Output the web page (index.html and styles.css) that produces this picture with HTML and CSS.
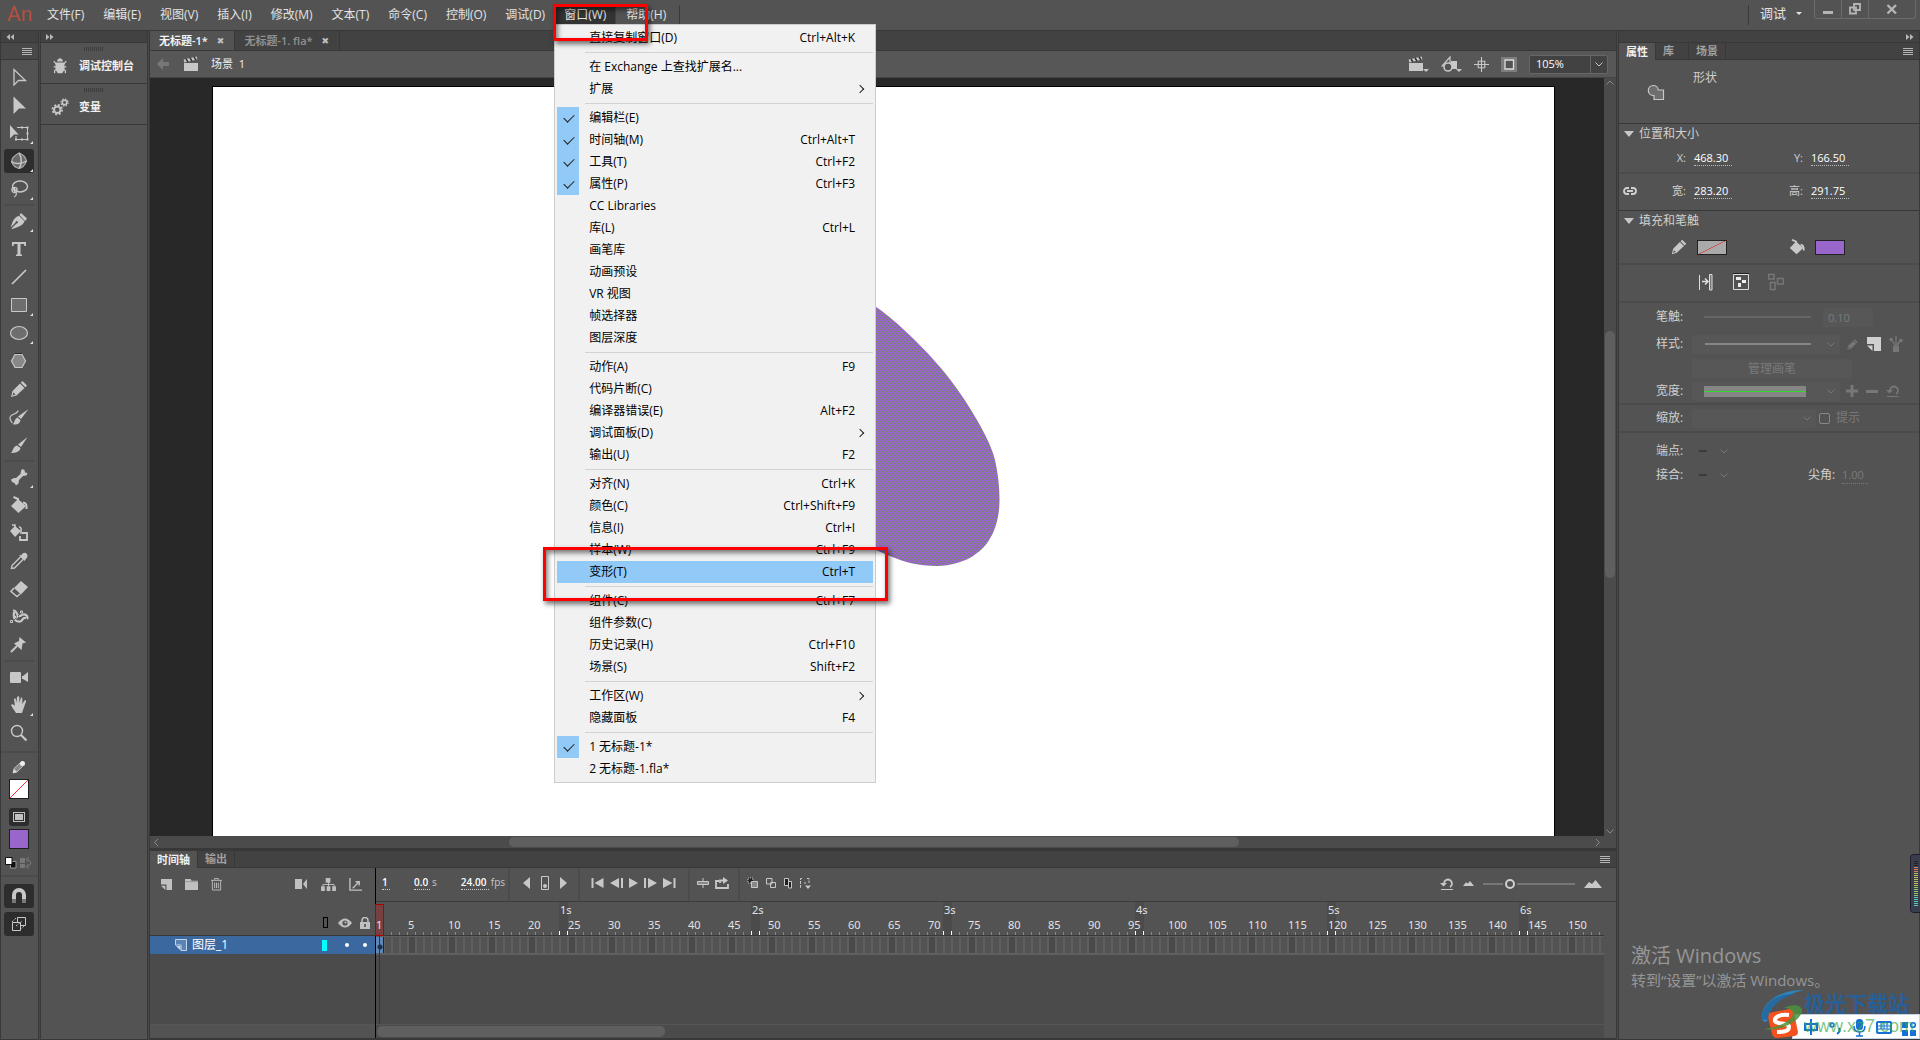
FILE: index.html
```html
<!DOCTYPE html>
<html lang="zh-CN">
<head>
<meta charset="utf-8">
<title>An - 无标题-1*</title>
<link rel="stylesheet" href="styles.css">
</head>
<body>
<svg class="defs" aria-hidden="true">
  <defs>
    <symbol id="i-select" viewBox="0 0 20 20"><path d="M5 2.500V18L9.500 13.500H16.500Z" fill="none" stroke="currentColor" stroke-width="1.300"/></symbol>
    <symbol id="i-subselect" viewBox="0 0 20 20"><path d="M4.500 1.500V19L10 13.500H17Z" fill="currentColor"/></symbol>
    <symbol id="i-transform" viewBox="0 0 20 20"><path d="M1 2V15.500L5 11.500H9.500Z" fill="currentColor"/><path d="M8 4.500H18.500V16.500H7V13" fill="none" stroke="currentColor"/><path d="M17.500 3.500h2v2h-2zM17.500 9.500h2v2h-2zM17.500 15.500h2v2h-2zM12 15.500h2v2h-2zM6 15.500h2v2h-2zM12 3.500h2v2h-2z" fill="currentColor"/></symbol>
    <symbol id="i-rotate3d" viewBox="0 0 20 20"><path d="M10 2C14 3 17 7 17.500 10C16 14 13 17 10 17.500C6 16.500 3.500 13.500 2.500 10.500C3 7 6 4 10 2Z" fill="#6a6a6a" stroke="#aaa" stroke-width="1.200"/><path d="M10 2C13 6 13 14 10 17.500M2.500 10.500C6 13.500 13 13 17.500 10" fill="none" stroke="currentColor" stroke-width="1.500"/></symbol>
    <symbol id="i-lasso" viewBox="0 0 20 20"><ellipse cx="11" cy="7.500" rx="7.500" ry="5.500" fill="none" stroke="currentColor" stroke-width="1.400"/><circle cx="5.500" cy="11" r="2.600" fill="none" stroke="currentColor" stroke-width="1.300"/><path d="M3 11H8M5.500 8.500V13C8 13 8 17 5 18" fill="none" stroke="currentColor" stroke-width="1.200"/></symbol>
    <symbol id="i-pen" viewBox="0 0 20 20"><path d="M12 2L18 7.500L16 10L10.500 4Z" fill="currentColor"/><path d="M10 4.800L15.500 10.300C14 15 8 16.500 3 18L2.500 17.500L7.500 12.500A1.200 1.200 0 1 0 6.500 11.500L1.800 16.500C3 12 5 6 10 4.800Z" fill="currentColor"/></symbol>
    <symbol id="i-text" viewBox="0 0 20 20"><path d="M3 3H17V7H15.500L15 5H11.500V15.500H13V17H7V15.500H8.500V5H5L4.500 7H3Z" fill="currentColor"/></symbol>
    <symbol id="i-line" viewBox="0 0 20 20"><path d="M3 17L17 3" stroke="currentColor" stroke-width="1.700"/></symbol>
    <symbol id="i-rect" viewBox="0 0 20 20"><path d="M2.500 3.500H17.500V16.500H2.500Z" fill="#6e6e6e" stroke="currentColor"/></symbol>
    <symbol id="i-oval" viewBox="0 0 20 20"><ellipse cx="10" cy="10" rx="8.500" ry="6.500" fill="#6e6e6e" stroke="currentColor" stroke-width="1.200"/></symbol>
    <symbol id="i-hex" viewBox="0 0 20 20"><path d="M6 3.500H13L16.500 10L13 16.500H6L2.500 10Z" fill="#888" stroke="currentColor" stroke-width="1.200"/><path d="M6 2.500H13" stroke="#2b2b2b"/></symbol>
    <symbol id="i-pencil" viewBox="0 0 20 20"><path d="M13.500 2L18 6.500L16.300 8.200L11.800 3.700ZM11 4.500L15.500 9L7.500 16.500L2 18L3.500 12ZM4.500 13.500L3.500 16.500L6.500 15.500Z" fill="currentColor" fill-rule="evenodd"/></symbol>
    <symbol id="i-artbrush" viewBox="0 0 20 20"><path d="M19.500 2L12 12L9 9.500ZM8.500 10.500L11.500 13C11 17 7 18.500 3.500 17C6 16 5 12 8.500 10.500Z" fill="currentColor"/><path d="M9 3.500C9 8 1 6 1 11C1 14 3 14.500 3 16" fill="none" stroke="currentColor" stroke-width="1.200"/></symbol>
    <symbol id="i-brush" viewBox="0 0 20 20"><path d="M18.500 2L12 12L9 9.500ZM8 10.500L11.500 13C11 17 6 18 2 18C4 16 4 11.500 8 10.500Z" fill="currentColor"/></symbol>
    <symbol id="i-bone" viewBox="0 0 20 20"><path d="M13 2L15.500 3L16 5.500L18.500 6L17.500 8.500L14 9L10 13L9.500 16.500L7 18.500L5.500 16L3 15L2 12.500L5 11H7L11.500 7L12 4Z" fill="currentColor"/></symbol>
    <symbol id="i-bucket" viewBox="0 0 20 20"><path d="M9 4L17 11L9.500 18L2 11Z" fill="currentColor"/><path d="M9 10V4L4.500 2M14 7.500C18 8 17.500 11 17.500 14" fill="none" stroke="currentColor" stroke-width="2"/></symbol>
    <symbol id="i-inkbottle" viewBox="0 0 20 20"><path d="M6 3L12 8L6 14L1 8Z" fill="currentColor"/><path d="M6 6V2H3M10 4C13 4 12 7 12 11" fill="none" stroke="currentColor" stroke-width="1.500"/><path d="M13 10H18V17H11V13" fill="none" stroke="currentColor" stroke-width="1.800"/></symbol>
    <symbol id="i-eyedrop" viewBox="0 0 20 20"><path d="M11.500 6L3 14.500L2.500 17.500L5.500 17L14 8.500" fill="none" stroke="currentColor" stroke-width="1.400"/><path d="M10 4.500L15.500 10L16.500 8.500C19 6 19 4 17.500 2.500C16 1 14 1.500 12.500 4Z" fill="currentColor"/></symbol>
    <symbol id="i-eraser" viewBox="0 0 20 20"><path d="M12 2L19 8L12 15.500L5 9Z" fill="currentColor"/><path d="M5 9L2 12.500L8 17.500L11 15" fill="none" stroke="currentColor" stroke-width="1.500"/></symbol>
    <symbol id="i-width" viewBox="0 0 20 20"><path d="M4 3.500C9 3 7 10 11 9C14 8 14 6 17 8C19 9 18 11 19 12M5 5C4 13 7 15 11 14.500C14 14 13 10 17 11" fill="none" stroke="currentColor" stroke-width="2.200"/><path d="M3 15L12 6" stroke="#535353"/><path d="M1.500 13.500h2v2h-2zM11.500 4h2v2h-2zM6.500 9h2v2h-2z" fill="#535353" stroke="currentColor"/></symbol>
    <symbol id="i-pin" viewBox="0 0 20 20"><path d="M10.500 2L17 7.500L13.500 8.500L12.500 15L5 8.500L10 6Z" fill="currentColor"/><path d="M8 11L2 17" stroke="currentColor" stroke-width="2"/></symbol>
    <symbol id="i-camera" viewBox="0 0 20 20"><rect x="1" y="5" width="11" height="11" rx="1" fill="currentColor"/><path d="M13 9H14L19 5V15L14 12H13Z" fill="currentColor"/></symbol>
    <symbol id="i-hand" viewBox="0 0 20 20"><path d="M7 18C5 15 3 12 2 10C3 8.500 5 10 6 11L5 4C6 2.500 7 3.500 7.500 8L8 2C9 1 10 1 10.300 2V8L12 2.500C13 2 14 3 13 9L16 5C17 5 17.500 6 16.500 8L14 15L13 18Z" fill="currentColor"/></symbol>
    <symbol id="i-zoom" viewBox="0 0 20 20"><circle cx="8" cy="8" r="5.500" fill="none" stroke="currentColor" stroke-width="1.400"/><path d="M12 12L17.500 17.500" stroke="currentColor" stroke-width="2.200"/></symbol>
    <symbol id="i-strokepen" viewBox="0 0 20 20"><path d="M4 16L5 11.500L11 6L14 9L8 15Z" fill="#888" stroke="#bbb"/><path d="M4 16l1-4 3 3z" fill="#ddd"/><circle cx="13.500" cy="6.500" r="2.500" fill="#eee"/></symbol>
    <symbol id="i-magnet" viewBox="0 0 20 20"><path d="M5 13V9A5 5 0 0 1 15 9V13" fill="none" stroke="currentColor" stroke-width="4"/><path d="M5 13V17M15 13V17" stroke="#777" stroke-width="4"/></symbol>
    <symbol id="i-snap" viewBox="0 0 20 20"><path d="M3.500 8.500H11.500V16.500H3.500Z" fill="none" stroke="currentColor"/><path d="M8.500 8V3.500H16.500V11.500H12" fill="none" stroke="currentColor"/><path d="M3 8L8 3M11 16L16 11M7 12L13 7" stroke="currentColor" stroke-dasharray="2 1.500"/></symbol>
    <symbol id="i-bug" viewBox="0 0 20 20"><path d="M7 3L10 1L13 3V5H7ZM5 6H15V14L12.500 18H7.500L5 14Z" fill="currentColor"/><path d="M3 4.500L6 8M17 4.500L14 8M3 11H17M4 18V15L7 13M16 18V15L13 13" fill="none" stroke="currentColor" stroke-width="1.400"/></symbol>
    <symbol id="i-gears" viewBox="0 0 20 20"><circle cx="7" cy="13" r="3.600" fill="none" stroke="currentColor" stroke-width="2.200"/><circle cx="7" cy="13" r="5.400" fill="none" stroke="currentColor" stroke-width="1.800" stroke-dasharray="2.200 2.040"/><circle cx="15" cy="5" r="2.400" fill="none" stroke="currentColor" stroke-width="1.600"/><circle cx="15" cy="5" r="3.900" fill="none" stroke="currentColor" stroke-width="1.400" stroke-dasharray="1.700 1.363"/></symbol>
    <symbol id="i-clapper" viewBox="0 0 16 16"><path d="M1 7H15V15H1Z" fill="currentColor"/><path d="M1 5L14 2" stroke="currentColor" stroke-width="3"/><path d="M3 3l2 3M7 2l2 3M11 1l2 3" stroke="#333" stroke-width="1.500"/></symbol>
    <symbol id="i-back" viewBox="0 0 12 12"><path d="M0 6L6 0V4H12V8H6V12Z" fill="currentColor"/></symbol>
    <symbol id="i-shapes" viewBox="0 0 16 16"><path d="M9 1V10H1Z" fill="none" stroke="currentColor" stroke-width="1.200"/><path d="M10 5H16V13H9Z" fill="currentColor"/><circle cx="7" cy="11" r="4" fill="#535353" stroke="currentColor" stroke-width="1.600"/></symbol>
    <symbol id="i-center" viewBox="0 0 16 16"><path d="M8 0V16M0 8H16M4.500 4.500H11.500V11.500H4.500Z" fill="none" stroke="currentColor" stroke-width="1.200"/></symbol>
    <symbol id="i-clip" viewBox="0 0 16 16"><path d="M0 1H16V16H0Z" fill="#7d7d7d"/><path d="M4 4H12.500V13H4Z" fill="#535353" stroke="#ddd" stroke-width="1.300"/></symbol>
    <symbol id="i-shape" viewBox="0 0 18 18"><path d="M6 12.500A5 5 0 1 1 11.300 7H16.500V16.500H7V12.500Z" fill="#6e6e6e" stroke="#c8c8c8" stroke-width="1.200"/></symbol>
    <symbol id="i-link" viewBox="0 0 14 10"><path d="M6 2H4A3 3 0 0 0 4 8H6M8 2H10A3 3 0 0 1 10 8H8M4 5H10" fill="none" stroke="currentColor" stroke-width="1.800"/></symbol>
    <symbol id="i-chev" viewBox="0 0 8 5"><path d="M.5 .5L4 4L7.500 .5" fill="none" stroke="currentColor"/></symbol>
    <symbol id="i-dbl" viewBox="0 0 8 6"><path d="M0 0L3.500 3L0 6ZM4 0L7.500 3L4 6Z" fill="currentColor"/></symbol>
    <symbol id="i-page" viewBox="0 0 14 14"><path d="M0 0H14V14H7V7H0Z" fill="currentColor"/><path d="M0 8.500H5.500V14Z" fill="currentColor"/></symbol>
    <symbol id="i-folder" viewBox="0 0 14 14"><path d="M0 1H6L7 3H14V13H0Z" fill="currentColor"/><path d="M0 4H14" stroke="#777" stroke-width=".6"/></symbol>
    <symbol id="i-trash" viewBox="0 0 12 14"><path d="M0 2.500H12M4 2V.5H8V2M1.500 3V13H10.500V3M4 5V11M6 5V11M8 5V11" fill="none" stroke="currentColor"/></symbol>
    <symbol id="i-cam2" viewBox="0 0 14 12"><path d="M1 1H8V11H1ZM9 6L13 1V11Z" fill="currentColor"/></symbol>
    <symbol id="i-tree" viewBox="0 0 16 14"><path d="M5 0h5v5h-5zM0 9h4v5h-4zM6 9h4v5h-4zM12 9h4v5h-4z" fill="currentColor"/><path d="M8 4V9M2 9V7H14V9" fill="none" stroke="currentColor"/></symbol>
    <symbol id="i-graph" viewBox="0 0 14 14"><path d="M1 0V13H14M4 11L11 4M7 4H11V8" fill="none" stroke="currentColor" stroke-width="1.500"/></symbol>
    <symbol id="i-prev" viewBox="0 0 7 12"><path d="M7 0V12L0 6Z" fill="currentColor"/></symbol>
    <symbol id="i-next" viewBox="0 0 7 12"><path d="M0 0V12L7 6Z" fill="currentColor"/></symbol>
    <symbol id="i-kframe" viewBox="0 0 8 14"><path d="M.5 .5H7.500V13.500H.5Z" fill="none" stroke="currentColor"/><circle cx="4" cy="10" r="2" fill="currentColor"/></symbol>
    <symbol id="i-first" viewBox="0 0 13 10"><path d="M.5 0H2.500V10H.5ZM12.500 0V10L3.500 5Z" fill="currentColor"/></symbol>
    <symbol id="i-stepb" viewBox="0 0 13 10"><path d="M9 0V10L0 5ZM11 0H13V10H11Z" fill="currentColor"/></symbol>
    <symbol id="i-play" viewBox="0 0 9 10"><path d="M0 0L9 5L0 10Z" fill="currentColor"/></symbol>
    <symbol id="i-stepf" viewBox="0 0 13 10"><path d="M0 0H2V10H0ZM4 0L13 5L4 10Z" fill="currentColor"/></symbol>
    <symbol id="i-last" viewBox="0 0 13 10"><path d="M0 0L9.500 5L0 10ZM10.500 0H12.500V10H10.500Z" fill="currentColor"/></symbol>
    <symbol id="i-mid" viewBox="0 0 12 12"><path d="M6 1V11" stroke="currentColor"/><path d="M.5 4.500H11.500V7.500H.5Z" fill="#888" stroke="currentColor"/></symbol>
    <symbol id="i-loop" viewBox="0 0 14 12"><path d="M4 4H1V11H13V7M5 6V3.500H10" fill="none" stroke="currentColor" stroke-width="1.800"/><path d="M8 0L13 3.500L8 7Z" fill="currentColor"/></symbol>
    <symbol id="i-onion" viewBox="0 0 12 12"><path d="M1 1H6V6H1Z" fill="#222" stroke="currentColor" stroke-dasharray="1 1"/><path d="M4.500 4.500H10.500V10.500H4.500Z" fill="#888" stroke="currentColor"/></symbol>
    <symbol id="i-onion2" viewBox="0 0 12 12"><path d="M1.500 1.500H7V7H1.500ZM5.500 5.500H10.500V10.500H5.500Z" fill="none" stroke="currentColor"/></symbol>
    <symbol id="i-onion3" viewBox="0 0 10 12"><path d="M1.500 1.500H5.500V8.500H1.500Z" fill="#222" stroke="currentColor"/><path d="M5.500 4.500H8.500V11H5.500Z" fill="#222" stroke="currentColor"/></symbol>
    <symbol id="i-marks" viewBox="0 0 12 12"><path d="M3 1.500H1.500V10.500H3M8 1.500H10V6M5 6H7" fill="none" stroke="currentColor" stroke-dasharray="3 1"/><path d="M6 8.500H12L9 12Z" fill="currentColor"/></symbol>
    <symbol id="i-reset" viewBox="0 0 14 12"><path d="M4 5A4 4 0 1 1 10 9" fill="none" stroke="currentColor" stroke-width="1.800"/><path d="M0 5H7L3.500 8.500ZM1 11H13V12H1Z" fill="currentColor"/></symbol>
    <symbol id="i-hills" viewBox="0 0 18 8"><path d="M0 8L5 2L8 4L11.500 0L18 8Z" fill="currentColor"/></symbol>
    <symbol id="i-eye" viewBox="0 0 14 10"><path d="M0 5Q7 -4 14 5Q7 14 0 5Z" fill="currentColor"/><circle cx="7" cy="5" r="2.600" fill="#535353"/><circle cx="7.500" cy="4.500" r="1" fill="currentColor"/></symbol>
    <symbol id="i-lock" viewBox="0 0 10 12"><path d="M0 5H10V12H0Z" fill="currentColor"/><path d="M2 5V3.500A3 3 0 0 1 8 3.500V5" fill="none" stroke="currentColor" stroke-width="1.500"/><path d="M5 7V10" stroke="#444" stroke-width="1.500"/></symbol>
    <symbol id="i-layer" viewBox="0 0 12 12"><path d="M.5 .5H11.500V11.500H6V6H.5Z" fill="#5c83b5" stroke="#c5d5ea"/><path d="M1 7L5.500 11.500V7Z" fill="#c5d5ea"/></symbol>
    <symbol id="i-arrows" viewBox="0 0 16 18"><path d="M1.500 2V17" stroke="currentColor"/><path d="M4 8.500H9M7 5.500L10 8.500L7 11.500" fill="none" stroke="currentColor" stroke-width="1.500"/><path d="M11.500 1.500H14V17H11.500Z" fill="#777" stroke="currentColor"/></symbol>
    <symbol id="i-blocks" viewBox="0 0 16 18"><path d="M.5 1.500H15.500V16.500H.5Z" fill="none" stroke="currentColor"/><path d="M0 .5H16" stroke="#222"/><path d="M3 4h5v3h-5zM9 7h4v3h-4zM5 10h3v4h-3z" fill="#eee"/></symbol>
    <symbol id="i-blocks2" viewBox="0 0 16 18"><path d="M.5 1.500H6V6H.5ZM9.500 5.500H15.500V11H9.500ZM2.500 9.500H7V16.500H2.500Z" fill="none" stroke="currentColor" stroke-width="1.500"/></symbol>
    <symbol id="i-brushes" viewBox="0 0 14 16"><path d="M4 9.500H10V16H4Z" fill="currentColor"/><path d="M7 9V0M6 9L2 3M8 9L12 4" stroke="currentColor" stroke-width="1.300"/><circle cx="2" cy="3.500" r="1.800" fill="currentColor"/><circle cx="12" cy="4.500" r="1.800" fill="currentColor"/></symbol>
  </defs>
</svg>

<div class="app">
  <header class="menubar">
    <span class="logo">An</span>
    <nav class="menus" aria-label="主菜单">
      <button>文件(F)</button>
      <button>编辑(E)</button>
      <button>视图(V)</button>
      <button>插入(I)</button>
      <button>修改(M)</button>
      <button>文本(T)</button>
      <button>命令(C)</button>
      <button>控制(O)</button>
      <button>调试(D)</button>
      <div class="menu-wrap">
        <button class="open" aria-expanded="true">窗口(W)</button>
        <div class="menu" role="menu">
          <button role="menuitem"><span>直接复制窗口(D)</span><kbd>Ctrl+Alt+K</kbd></button>
          <hr>
          <button role="menuitem"><span>在 Exchange 上查找扩展名...</span></button>
          <button role="menuitem" class="sub"><span>扩展</span></button>
          <hr>
          <button role="menuitem" class="on"><span>编辑栏(E)</span></button>
          <button role="menuitem" class="on"><span>时间轴(M)</span><kbd>Ctrl+Alt+T</kbd></button>
          <button role="menuitem" class="on"><span>工具(T)</span><kbd>Ctrl+F2</kbd></button>
          <button role="menuitem" class="on"><span>属性(P)</span><kbd>Ctrl+F3</kbd></button>
          <button role="menuitem"><span>CC Libraries</span></button>
          <button role="menuitem"><span>库(L)</span><kbd>Ctrl+L</kbd></button>
          <button role="menuitem"><span>画笔库</span></button>
          <button role="menuitem"><span>动画预设</span></button>
          <button role="menuitem"><span>VR 视图</span></button>
          <button role="menuitem"><span>帧选择器</span></button>
          <button role="menuitem"><span>图层深度</span></button>
          <hr>
          <button role="menuitem"><span>动作(A)</span><kbd>F9</kbd></button>
          <button role="menuitem"><span>代码片断(C)</span></button>
          <button role="menuitem"><span>编译器错误(E)</span><kbd>Alt+F2</kbd></button>
          <button role="menuitem" class="sub"><span>调试面板(D)</span></button>
          <button role="menuitem"><span>输出(U)</span><kbd>F2</kbd></button>
          <hr>
          <button role="menuitem"><span>对齐(N)</span><kbd>Ctrl+K</kbd></button>
          <button role="menuitem"><span>颜色(C)</span><kbd>Ctrl+Shift+F9</kbd></button>
          <button role="menuitem"><span>信息(I)</span><kbd>Ctrl+I</kbd></button>
          <button role="menuitem"><span>样本(W)</span><kbd>Ctrl+F9</kbd></button>
          <button role="menuitem" class="hover"><span>变形(T)</span><kbd>Ctrl+T</kbd></button>
          <hr>
          <button role="menuitem"><span>组件(C)</span><kbd>Ctrl+F7</kbd></button>
          <button role="menuitem"><span>组件参数(C)</span></button>
          <button role="menuitem"><span>历史记录(H)</span><kbd>Ctrl+F10</kbd></button>
          <button role="menuitem"><span>场景(S)</span><kbd>Shift+F2</kbd></button>
          <hr>
          <button role="menuitem" class="sub"><span>工作区(W)</span></button>
          <button role="menuitem"><span>隐藏面板</span><kbd>F4</kbd></button>
          <hr>
          <button role="menuitem" class="on"><span>1 无标题-1*</span></button>
          <button role="menuitem"><span>2 无标题-1.fla*</span></button>
        </div>
        <div class="mark mark-title"></div>
        <div class="mark mark-item"></div>
      </div>
      <button class="last">帮助(H)</button>
    </nav>
    <button class="workspace-switch">调试 <i class="caret"></i></button>
    <div class="win-controls">
      <button aria-label="最小化"><svg width="12" height="12"><path d="M1 8H11V11H1Z" fill="currentColor"/></svg></button>
      <button aria-label="还原"><svg width="12" height="12"><path d="M5 1H11V7H5ZM1 4.500H7V10.500H1Z" fill="none" stroke="currentColor" stroke-width="1.800"/></svg></button>
      <button class="close" aria-label="关闭"><svg width="12" height="12"><path d="M1.500 2L10 10.500M10 2L1.500 10.500" stroke="currentColor" stroke-width="2.400"/></svg></button>
    </div>
  </header>

  <div class="workspace">
    <aside class="tools">
      <div class="dock-head"><svg class="flip" width="8" height="6"><use href="#i-dbl"/></svg></div>
      <div class="dock-menu"><i class="burger"></i></div>
      <div class="tool-list">
        <button aria-label="选择"><svg><use href="#i-select"/></svg></button>
        <button aria-label="部分选取"><svg><use href="#i-subselect"/></svg></button>
        <button class="fly" aria-label="任意变形"><svg><use href="#i-transform"/></svg></button>
        <button class="fly active" aria-label="3D 旋转"><svg><use href="#i-rotate3d"/></svg></button>
        <button class="fly" aria-label="套索"><svg><use href="#i-lasso"/></svg></button>
        <hr>
        <button class="fly" aria-label="钢笔"><svg><use href="#i-pen"/></svg></button>
        <button aria-label="文本"><svg><use href="#i-text"/></svg></button>
        <button aria-label="线条"><svg><use href="#i-line"/></svg></button>
        <button class="fly" aria-label="矩形"><svg><use href="#i-rect"/></svg></button>
        <button class="fly" aria-label="椭圆"><svg><use href="#i-oval"/></svg></button>
        <button aria-label="多角星形"><svg><use href="#i-hex"/></svg></button>
        <button aria-label="铅笔"><svg><use href="#i-pencil"/></svg></button>
        <button aria-label="艺术画笔"><svg><use href="#i-artbrush"/></svg></button>
        <button aria-label="画笔"><svg><use href="#i-brush"/></svg></button>
        <hr>
        <button class="fly" aria-label="骨骼"><svg><use href="#i-bone"/></svg></button>
        <button aria-label="颜料桶"><svg><use href="#i-bucket"/></svg></button>
        <button aria-label="墨水瓶"><svg><use href="#i-inkbottle"/></svg></button>
        <button aria-label="滴管"><svg><use href="#i-eyedrop"/></svg></button>
        <button aria-label="橡皮擦"><svg><use href="#i-eraser"/></svg></button>
        <button aria-label="宽度"><svg><use href="#i-width"/></svg></button>
        <button aria-label="资源变形"><svg><use href="#i-pin"/></svg></button>
        <hr>
        <button aria-label="摄像头"><svg><use href="#i-camera"/></svg></button>
        <button class="fly" aria-label="手形"><svg><use href="#i-hand"/></svg></button>
        <button aria-label="缩放"><svg><use href="#i-zoom"/></svg></button>
      </div>
      <div class="tool-colors">
        <svg width="20" height="20"><use href="#i-strokepen"/></svg>
        <button class="chip none" aria-label="笔触颜色"></button>
        <button class="fill-mode" aria-label="填充"></button>
        <button class="chip purple" aria-label="填充颜色"></button>
        <div class="swap">
          <svg width="28" height="12"><path d="M5.500 4.500H11V11H5.500Z" fill="#111" stroke="#999"/><path d="M.5 .5H7V7.500H.5Z" fill="#fff" stroke="#111"/><path d="M15 1h5v5h-5zM15 7h5v4h-5z" fill="#777"/><path d="M22 2.500C27 3 27 9 22 9.500M24 0L21 2.500L24 5M24 7L21 9.500L24 12" fill="none" stroke="#777"/></svg>
        </div>
      </div>
      <div class="tool-options">
        <button aria-label="贴紧至对象"><svg><use href="#i-magnet"/></svg></button>
        <button aria-label="全局"><svg><use href="#i-snap"/></svg></button>
      </div>
    </aside>

    <aside class="collapsed">
      <div class="dock-head"><svg width="8" height="6"><use href="#i-dbl"/></svg></div>
      <button class="dock-item"><svg width="18" height="18"><use href="#i-bug"/></svg>调试控制台</button>
      <button class="dock-item"><svg width="18" height="18"><use href="#i-gears"/></svg>变量</button>
    </aside>

    <main class="center">
      <div class="doc-tabs">
        <div class="doc-tab active"><span>无标题-1*</span><button aria-label="关闭">✖</button></div>
        <div class="doc-tab"><span>无标题-1. fla*</span><button aria-label="关闭">✖</button></div>
      </div>
      <div class="edit-bar">
        <svg class="dim" width="12" height="12"><use href="#i-back"/></svg>
        <svg width="16" height="16"><use href="#i-clapper"/></svg>
        <span class="scene">场景 &nbsp;1</span>
        <div class="edit-tools">
          <button class="drop" aria-label="编辑场景"><svg width="16" height="16"><use href="#i-clapper"/></svg><i class="caret"></i></button>
          <button class="drop" aria-label="编辑元件"><svg width="16" height="16"><use href="#i-shapes"/></svg><i class="caret"></i></button>
          <button aria-label="舞台居中"><svg width="15" height="15"><use href="#i-center"/></svg></button>
          <button aria-label="剪切掉舞台范围以外的内容"><svg width="16" height="16"><use href="#i-clip"/></svg></button>
        </div>
        <div class="pick zoom"><select aria-label="缩放比例"><option>105%</option></select><svg width="8" height="5"><use href="#i-chev"/></svg></div>
      </div>
      <div class="stage-area">
        <div class="pasteboard">
          <div class="stage">
            <svg class="drawing" width="140" height="270" viewBox="0 0 140 270">
              <defs><pattern id="sel" width="4" height="4" patternUnits="userSpaceOnUse"><path d="M0 0H4V4H0Z" fill="#9966cc"/><path d="M0 0h1v1h-1zM2 2h1v1h-1z" fill="#6f8a52"/></pattern></defs>
              <path d="M0 -9L16 2C30 11 58 36 80 62C96 81 108 99 117 115C126 131 132 143 135 155C138 168 139.500 182 139.500 195C139.500 208 137 219 133 228C128 238 123 244 117 248C111 253 104 256 97 258C90 260 84 261 77 261C68 261 59 260 50 258C39 255 27 250 16 245L0 238Z" fill="url(#sel)"/>
            </svg>
          </div>
        </div>
        <div class="scroll v"><svg class="up" width="8" height="5"><use href="#i-chev"/></svg><span class="s242"></span><span class="thumb"></span><span class="s247"></span><svg width="8" height="5"><use href="#i-chev"/></svg></div>
        <div class="scroll h"><svg class="left" width="8" height="5"><use href="#i-chev"/></svg><span class="s347"></span><span class="thumb"></span><span class="s353"></span><svg class="right" width="8" height="5"><use href="#i-chev"/></svg></div>
      </div>

      <section class="timeline">
        <div class="panel-tabs">
          <button class="active">时间轴</button><button>输出</button><i class="burger"></i>
        </div>
        <div class="tl-body">
          <div class="layers">
            <div class="layer-tools">
              <button aria-label="新建图层"><svg width="11" height="11"><use href="#i-page"/></svg></button>
              <button aria-label="新建文件夹"><svg width="13" height="13"><use href="#i-folder"/></svg></button>
              <button aria-label="删除"><svg width="11" height="13"><use href="#i-trash"/></svg></button>
              <span class="push"></span>
              <button aria-label="添加摄像头"><svg width="14" height="12"><use href="#i-cam2"/></svg></button>
              <button aria-label="父级视图"><svg width="15" height="13"><use href="#i-tree"/></svg></button>
              <button aria-label="图层深度"><svg width="13" height="13"><use href="#i-graph"/></svg></button>
            </div>
            <div class="layer-heads"><i class="outline"></i><svg width="14" height="10"><use href="#i-eye"/></svg><svg width="10" height="12"><use href="#i-lock"/></svg></div>
            <div class="layer"><svg width="12" height="12"><use href="#i-layer"/></svg><span>图层_1</span><i class="cyan"></i><i class="dot"></i><i class="dot"></i></div>
            <div class="blank"></div>
            <div class="foot"></div>
          </div>
          <div class="frames">
            <div class="playbar">
              <div class="readout"><input aria-label="当前帧" value="1" class="w8"><label><input value="0.0" class="w14"> s</label><label><input value="24.00" class="w24"> fps</label></div>
              <div class="group g1"><svg width="7" height="12"><use href="#i-prev"/></svg><svg width="8" height="14"><use href="#i-kframe"/></svg><svg width="7" height="12"><use href="#i-next"/></svg></div>
              <div class="group g2"><svg width="13" height="10"><use href="#i-first"/></svg><svg width="13" height="10"><use href="#i-stepb"/></svg><svg width="9" height="10"><use href="#i-play"/></svg><svg width="13" height="10"><use href="#i-stepf"/></svg><svg width="13" height="10"><use href="#i-last"/></svg></div>
              <div class="group g3"><svg width="12" height="12"><use href="#i-mid"/></svg><svg width="14" height="12"><use href="#i-loop"/></svg></div>
              <div class="group g4"><svg width="12" height="12"><use href="#i-onion"/></svg><svg width="12" height="12"><use href="#i-onion2"/></svg><svg width="10" height="12"><use href="#i-onion3"/></svg><svg width="12" height="12"><use href="#i-marks"/></svg></div>
              <div class="tl-zoom"><svg width="14" height="12"><use href="#i-reset"/></svg><svg width="11" height="5"><use href="#i-hills"/></svg><input type="range" aria-label="时间轴缩放" min="0" max="100" value="27"><svg width="18" height="8"><use href="#i-hills"/></svg></div>
            </div>
            <div class="ruler">
              <div class="secs"><span>1s</span><span>2s</span><span>3s</span><span>4s</span><span>5s</span><span>6s</span></div>
              <div class="nums"><span>1</span><span>5</span><span>10</span><span>15</span><span>20</span><span>25</span><span>30</span><span>35</span><span>40</span><span>45</span><span>50</span><span>55</span><span>60</span><span>65</span><span>70</span><span>75</span><span>80</span><span>85</span><span>90</span><span>95</span><span>100</span><span>105</span><span>110</span><span>115</span><span>120</span><span>125</span><span>130</span><span>135</span><span>140</span><span>145</span><span>150</span></div>
            </div>
            <div class="track"><i class="key"></i></div>
            <div class="blank"></div>
            <div class="foot"><span class="thumb"></span></div>
            <div class="playhead"></div>
          </div>
        </div>
      </section>
    </main>

    <aside class="props">
      <div class="dock-head end"><svg width="8" height="6"><use href="#i-dbl"/></svg></div>
      <div class="panel-tabs"><button class="active">属性</button><button class="lib">库</button><button>场景</button><i class="burger"></i></div>
      <div class="kind"><svg width="18" height="18"><use href="#i-shape"/></svg><span>形状</span></div>
      <section>
        <h2>位置和大小</h2>
        <div class="pos"><label for="px">X:</label><input id="px" value="468.30"><label for="py">Y:</label><input id="py" value="166.50"></div>
        <div class="pos size"><svg width="14" height="10"><use href="#i-link"/></svg><label for="pw">宽:</label><input id="pw" value="283.20"><label for="ph">高:</label><input id="ph" value="291.75"></div>
      </section>
      <section>
        <h2>填充和笔触</h2>
        <div class="paint"><svg width="18" height="18"><use href="#i-pencil"/></svg><button class="sw none" aria-label="笔触颜色"></button><svg width="18" height="18"><use href="#i-bucket"/></svg><button class="sw purple" aria-label="填充颜色"></button></div>
        <div class="modes"><svg width="16" height="18"><use href="#i-arrows"/></svg><svg width="16" height="18"><use href="#i-blocks"/></svg><svg class="dim" width="16" height="18"><use href="#i-blocks2"/></svg></div>
        <div class="stroke">
          <div class="line l1"><label for="st">笔触:</label><div class="rail"></div><input id="st" class="box" value="0.10"></div>
          <div class="line l2"><label for="sy">样式:</label><div class="pick wide"><select id="sy" class="solid"><option></option></select><svg width="8" height="5"><use href="#i-chev"/></svg></div><svg class="dim" width="13" height="13"><use href="#i-pencil"/></svg><svg width="14" height="14"><use href="#i-page"/></svg><svg class="dim" width="14" height="16"><use href="#i-brushes"/></svg></div>
          <button class="manage">管理画笔</button>
          <div class="line l2"><label for="wd">宽度:</label><div class="pick wide"><select id="wd" class="profile"><option></option></select><svg width="8" height="5"><use href="#i-chev"/></svg></div><svg class="dim" width="12" height="12"><path d="M0 4.500H4.500V0H7.500V4.500H12V7.500H7.500V12H4.500V7.500H0Z" fill="currentColor"/></svg><svg class="dim" width="12" height="12"><path d="M0 5H12V8H0Z" fill="currentColor"/></svg><svg class="dim" width="14" height="12"><use href="#i-reset"/></svg></div>
        </div>
        <div class="line scale"><label for="sc">缩放:</label><div class="pick mid"><select id="sc"><option></option></select><svg width="8" height="5"><use href="#i-chev"/></svg></div><label class="hint"><input type="checkbox">提示</label></div>
        <div class="ends">
          <div class="line"><label>端点:</label><i class="dash"></i><svg class="dim" width="8" height="5"><use href="#i-chev"/></svg></div>
          <div class="line"><label>接合:</label><i class="dash"></i><svg class="dim" width="8" height="5"><use href="#i-chev"/></svg><label class="miter" for="mi">尖角:</label><input id="mi" class="mi" value="1.00"></div>
        </div>
      </section>
    </aside>
  </div>

  <div class="activate"><p>激活 Windows</p><p>转到“设置”以激活 Windows。</p></div>
  <svg class="meter" width="10" height="60"><rect x=".5" y=".5" width="14" height="58" rx="3" fill="#3a3d4d" stroke="#1b1d2b"/><path d="M6 7V13" stroke="#222" stroke-width="4" stroke-dasharray="1 1"/><path d="M6 13V19" stroke="#d9805c" stroke-width="4" stroke-dasharray="1 1"/><path d="M6 19V33" stroke="#c9bd58" stroke-width="4" stroke-dasharray="1 1"/><path d="M6 33V43" stroke="#92c86a" stroke-width="4" stroke-dasharray="1 1"/><path d="M6 43V53" stroke="#5cc9b4" stroke-width="4" stroke-dasharray="1 1"/></svg>
  <div class="ime">
    <svg width="126" height="24"><path d="M12 9H24V15H12ZM18 4V20" fill="none" stroke="#1670d8" stroke-width="2"/><circle cx="39" cy="10" r="2" fill="none" stroke="#1670d8" stroke-width="1.500"/><path d="M46 13q2 3-2 6" fill="none" stroke="#1670d8" stroke-width="2"/><rect x="63" y="4" width="7" height="11" rx="3" fill="#1670d8"/><path d="M61 11Q61 17 66.500 17Q72 17 72 11M66.500 17V21M63 21H70" fill="none" stroke="#1670d8" stroke-width="1.500"/><rect x="84" y="7" width="14" height="11" rx="1" fill="none" stroke="#1670d8" stroke-width="2"/><path d="M85 11H97M85 14H97M88 8V14M91 8V14M94 8V14" stroke="#1670d8"/><path d="M109 7h6v6h-6zM109 15h6v6h-6zM117 15h6v6h-6z" fill="#1670d8"/><circle cx="120" cy="10" r="2.300" fill="none" stroke="#1670d8" stroke-width="1.600"/></svg>
  </div>
  <div class="site">
    <svg width="46" height="48" viewBox="0 0 46 48"><path d="M9 23L29 19C33 19 34 21 34 23L38 42C38 44 37 45 35 46L17 48C14 48 13 46 12 44L8 27C8 25 8 24 9 23Z" fill="#f4511e"/><path d="M29 25C20 24 14 27 15 31C17 35 29 32 29 37C29 42 22 42 17 42" fill="none" stroke="#fff" stroke-width="4"/><path d="M44 0C16 0 0 15 2 29C4 34 9 32 8 27C10 15 26 4 44 0Z" fill="#2a86bb"/><path d="M2 29C2 12 18 3 36 4C20 8 8 17 8 30Z" fill="#27639b" opacity=".8"/><path d="M24 18C32 13 43 15 42 21C40 33 16 42 4 39C22 37 33 29 33 23C31 19 28 18 24 18Z" fill="#4c9140" opacity=".85"/></svg>
    <div><b>极光下载站</b><a href="#">www.xz7.com</a></div>
  </div>
</div>
</body>
</html>
```

FILE: styles.css
```css
* { box-sizing: border-box; }
body { margin: 0; background: #535353; color: #e3e3e3; font: 12px/16px "Open Sans", "Noto Sans CJK SC", sans-serif; }
button, input, select { margin: 0; padding: 0; border: 0; background: none; color: inherit; font: inherit; outline: 0; }
button { display: flex; align-items: center; flex: none; }
svg { display: block; flex: none; }
hr { border: 0; margin: 0; }
.defs { position: absolute; width: 0; height: 0; }
.app { position: relative; display: flex; flex-direction: column; min-height: 100vh; overflow: hidden; }

/* menu bar */
.menubar { display: flex; height: 31px; border-bottom: 1px solid #383838; }
.logo { width: 38px; padding-left: 7px; color: #b5503f; font: 21px/28px "Liberation Sans Narrow", "Roboto", sans-serif; }
.menus { display: flex; flex: 1; align-items: flex-start; gap: 1px; padding-top: 5px; }
.menus > button, .open { height: 19px; padding: 0 9px; }
.menu-wrap { position: relative; border-right: 1px solid #444; }
.open { background: #333; }
.menus > .last { border-right: 1px solid #3a3a3a; padding-right: 13px; }
.menu { position: absolute; z-index: 5; top: 19px; left: -1px; width: 322px; padding: 2px; background: #f1f1f1; border: 1px solid #ccc; color: #000; }
.menu button { position: relative; width: 100%; height: 22px; padding: 0 18px 0 32px; justify-content: space-between; }
.menu kbd { font: inherit; }
.menu hr { height: 7px; margin-left: 28px; border-top: 3px solid #f1f1f1; border-bottom: 3px solid #f1f1f1; background: #d2d2d2; }
.menu .hover { background: #91c9f7; }
.menu .on::before { content: ""; position: absolute; left: 0; top: 0; width: 22px; height: 22px; background: #91c9f7; }
.menu .on::after { content: ""; position: absolute; left: 7px; top: 7px; width: 9px; height: 5px; border-left: 1px solid #222; border-bottom: 1px solid #222; transform: rotate(-45deg); }
.menu .sub::after { content: ""; position: absolute; right: 10px; top: 8px; width: 5px; height: 5px; border-top: 1px solid #222; border-right: 1px solid #222; transform: rotate(45deg); }
.mark { position: absolute; z-index: 6; border: 3px solid #f00; box-shadow: 2px 3px 5px rgba(0,0,0,.55), inset 2px 3px 5px rgba(0,0,0,.5); pointer-events: none; }
.mark-title { left: -2px; top: -1px; width: 95px; height: 37px; }
.mark-item { left: -12px; top: 542px; width: 345px; height: 54px; }
.caret { width: 0; height: 0; border: 3px solid transparent; border-top-color: currentColor; border-bottom: 0; }
.workspace-switch { height: 20px; margin: 5px 12px 0 0; padding: 0 0 4px 11px; gap: 10px; border-left: 1px solid #3a3a3a; font-size: 13px; }
.win-controls { display: flex; height: 19px; margin-right: 4px; border: 1px solid #6a6a6a; border-top: 0; border-radius: 0 0 3px 3px; color: #b4b4b4; }
.win-controls button { width: 27px; justify-content: center; border-right: 1px solid #6a6a6a; }
.win-controls .close { width: 46px; border: 0; }

/* docks */
.workspace { flex: 1; display: flex; gap: 1px; background: #484848; }
.tools, .collapsed, .props { background: #535353; border: 1px solid #383838; border-top: 0; }
.dock-head { display: flex; align-items: center; height: 12px; padding: 0 5px; background: #424242; border-bottom: 1px solid #383838; color: #b8b8b8; }
.dock-head.end { justify-content: flex-end; }
.flip { transform: scaleX(-1); }
.dock-menu { display: flex; align-items: center; justify-content: flex-end; height: 17px; padding-right: 6px; background: #484848; border-bottom: 1px solid #383838; }
.burger { width: 10px; height: 7px; background: repeating-linear-gradient(#b5b5b5 0 1px, transparent 1px 2px); }
.tools { width: 39px; color: #c8c8c8; }
.tools button svg { width: 20px; height: 20px; }
.tool-list { display: flex; flex-direction: column; padding: 3px 1px 4px 0; border-bottom: 2px solid #4b4b4b; }
.tool-list button { position: relative; height: 28px; justify-content: center; }
.tool-list hr { height: 2px; margin: 1px 3px; background: #4b4b4b; }
.fly::after { content: ""; position: absolute; right: 4px; bottom: 3px; border-left: 3px solid transparent; border-bottom: 3px solid #e0e0e0; }
.tool-list .active { background: #2d2d2d; border-radius: 3px; height: 24px; margin: 2px 3px; }
.tool-list .active::after { right: 1px; bottom: 1px; }
.tool-colors { display: flex; flex-direction: column; align-items: center; padding: 4px 1px 6px 0; border-bottom: 2px solid #4b4b4b; }
.chip { width: 20px; height: 20px; border: 1px solid #1f1f1f; }
.chip.none { margin: 2px 0 9px; background: linear-gradient(135deg, #fff 48%, #f33 48% 52%, #fff 52%); }
.purple { background: #9966cc; }
.fill-mode { width: 20px; height: 18px; margin-bottom: 3px; border: 4px solid #2d2d2d; border-radius: 3px; background: #c0c0c0; box-shadow: inset 0 0 0 1px #c0c0c0, inset 0 0 0 2px #2d2d2d; }
.swap { margin-top: 8px; }
.tool-options { display: flex; flex-direction: column; gap: 4px; padding: 7px 4px 0 3px; }
.tool-options button { height: 24px; justify-content: center; background: #2d2d2d; border-radius: 3px; }
.collapsed { width: 108px; }
.dock-item { width: 100%; height: 41px; padding: 6px 0 0 10px; gap: 10px; border-bottom: 1px solid #383838; font-size: 11px; font-weight: 700; color: #f0f0f0;
  background: repeating-linear-gradient(90deg, #3c3c3c 0 1px, transparent 1px 2px) 43px 4px / 20px 4px no-repeat; }
.dock-item svg { color: #c8c8c8; }

/* document */
.center { flex: 1; min-width: 0; display: flex; flex-direction: column; border: 1px solid #383838; border-top: 0; background: #535353; }
.doc-tabs { display: flex; height: 20px; background: #424242; border-bottom: 1px solid #383838; }
.doc-tab { display: flex; align-items: center; gap: 9px; padding: 0 10px 0 9px; border-right: 1px solid #383838; font-size: 11px; font-weight: 600; color: #909090; }
.doc-tab.active { background: #535353; color: #f4f4f4; }
.doc-tab button { font: 9px/12px "DejaVu Sans", sans-serif; color: #c0c0c0; }
.edit-bar { display: flex; align-items: center; height: 27px; padding: 0 8px 0 7px; gap: 14px; background: #575757; border-bottom: 1px solid #444; color: #c8c8c8; }
.edit-bar .dim { color: #777; }
.scene { margin-left: -2px; font-size: 11px; color: #f0f0f0; }
.edit-tools { display: flex; align-items: center; gap: 12px; margin: 0 -2px 0 auto; }
.drop { position: relative; width: 21px; }
.drop .caret { position: absolute; right: 0; bottom: 0; }
.pick { position: relative; }
.pick select { appearance: none; display: block; width: 100%; height: 19px; padding: 0 6px; border-radius: 2px; }
.pick svg { position: absolute; right: 5px; top: 7px; pointer-events: none; }
.pick.zoom { width: 79px; }
.zoom select { background: linear-gradient(#666, #666) 60px 0 / 1px 100% no-repeat #424242; border: 1px solid #666; color: #fff; font-size: 11px; }
.stage-area { flex: 1; display: grid; grid-template: 1fr 12px / 1fr 12px; background: #4b4b4b; }
.pasteboard { display: flex; padding: 8px 49px 0 62px; background: #282828; }
.stage { position: relative; flex: 1; background: #fff; border: 1px solid #000; border-bottom: 0; }
.drawing { position: absolute; left: 647px; top: 218px; }
.scroll { display: flex; align-items: center; justify-content: space-between; color: #8a8a8a; }
.scroll svg { margin: 2px; }
.scroll.v { flex-direction: column; }
.scroll .thumb { background: #5f5f5f; border-radius: 5px; }
.scroll.v .thumb { flex: 245; width: 10px; }
.scroll.h .thumb { flex: 730; height: 10px; }
.s242 { flex: 242; } .s247 { flex: 247; } .s347 { flex: 347; } .s353 { flex: 353; }
.up { transform: rotate(180deg); } .left { transform: rotate(90deg); } .right { transform: rotate(-90deg); }

/* panel tabs */
.panel-tabs { display: flex; align-items: center; height: 17px; padding-right: 6px; background: #424242; border-bottom: 1px solid #383838; }
.panel-tabs button { height: 100%; padding: 0 7px; border-right: 1px solid #383838; font-size: 11px; font-weight: 700; color: #a0a0a0; }
.panel-tabs .active { height: 17px; align-self: flex-start; background: #535353; color: #f0f0f0; }
.panel-tabs .lib { width: 33px; }
.panel-tabs .burger { margin-left: auto; }

/* timeline */
.timeline { border-top: 3px solid #383838; border-bottom: 1px solid #383838; }
.tl-body { display: flex; height: 170px; }
.layers { display: flex; flex-direction: column; width: 226px; border-right: 1px solid #000; }
.layer-tools { display: flex; align-items: center; height: 34px; padding: 0 13px 2px 11px; gap: 13px; color: #c0c0c0; }
.push { flex: 1; }
.layer-heads { display: flex; align-items: center; justify-content: flex-end; height: 34px; padding: 8px 5px 0 0; gap: 8px; border-bottom: 1px solid #383838; color: #c0c0c0; }
.outline { width: 5px; height: 11px; margin-right: 2px; border: 1px solid #000; }
.layer { display: flex; align-items: center; height: 18px; padding: 0 8px 0 25px; gap: 5px; background: #3b689f; color: #fff; font-size: 12px; }
.cyan { width: 5px; height: 11px; margin-left: auto; margin-right: 7px; background: #0ff; }
.dot { width: 4px; height: 4px; margin-left: 6px; margin-right: 5px; border-radius: 2px; background: #fff; }
.dot:last-child { margin-left: 4px; margin-right: 0; }
.blank { flex: 1; background: #4b4b4b; }
.foot { height: 14px; border-top: 1px solid #565656; }
.frames { position: relative; flex: 1; min-width: 0; display: flex; flex-direction: column; }
.frames .foot { display: flex; padding: 1px; margin-right: 12px; background: #4b4b4b; }
.frames .thumb { width: 288px; border-radius: 5px; background: #5f5f5f; }
.frames .blank { margin-right: 12px; }
.playbar { display: flex; height: 34px; padding-top: 1px; border-bottom: 1px solid #3c3c3c; color: #c8c8c8; }
.readout { display: flex; width: 132px; padding: 5px 0 0 6px; gap: 24px; font-size: 10px; line-height: 16px; }
.readout label { display: flex; gap: 2px; align-items: flex-start; }
.readout input { height: 16px; font-weight: 600; color: #fff; border-bottom: 1px dotted #ccc; }
.w8 { width: 8px; } .w14 { width: 16px; } .w24 { width: 28px; }
.group { display: flex; align-items: center; justify-content: space-between; padding-bottom: 5px; border-left: 2px solid #4b4b4b; }
.g1 { width: 70px; padding-left: 13px; padding-right: 11px; }
.g2 { width: 110px; padding-left: 11px; padding-right: 12px; }
.g3 { width: 50px; padding-left: 7px; padding-right: 9px; }
.g4 { width: 74px; padding-left: 7px; padding-right: 1px; }
.tl-zoom { display: flex; align-items: center; margin-left: auto; padding: 0 14px 3px 0; gap: 9px; }
.tl-zoom input { appearance: none; width: 92px; height: 12px; background: linear-gradient(#777, #777) 0 5px / 100% 2px no-repeat; }
.tl-zoom input::-webkit-slider-thumb { appearance: none; width: 10px; height: 10px; border: 2px solid #d0d0d0; border-radius: 5px; background: #535353; box-shadow: 0 0 0 2px #535353; }
.ruler { height: 34px; margin-right: 12px; overflow: hidden; font: 11px/16px "Noto Sans", sans-serif; border-bottom: 1px solid #383838;
  background:
    repeating-linear-gradient(90deg, transparent 0 183px, #fff 183px 184px, transparent 184px 191px, #fff 191px 192px) 0 29px / 100% 4px no-repeat,
    repeating-linear-gradient(90deg, transparent 0 7px, #888 7px 8px) 0 30px / 100% 3px no-repeat,
    repeating-linear-gradient(90deg, transparent 0 183px, #4b4b4b 183px 192px); }
.secs, .nums { display: flex; }
.secs { height: 15px; padding-left: 184px; }
.secs span { flex: none; width: 192px; }
.nums span { flex: none; width: 40px; }
.nums span:first-child { position: relative; z-index: 1; width: 32px; }
.track { height: 19px; margin-right: 12px; border-top: 1px solid #5f5f5f; border-bottom: 2px solid #5f5f5f;
  background: repeating-linear-gradient(90deg, transparent 0 33px, #4a4a4a 33px 39px, transparent 39px 40px), repeating-linear-gradient(90deg, #5f5f5f 0 1px, #535353 1px 7px, #5f5f5f 7px 8px); }
.key { display: block; width: 8px; height: 16px; background: radial-gradient(circle at 4px 10px, #1d2c44 0 2px, #5f87b8 3px); border-right: 1px solid #222; }
.playhead { position: absolute; left: -1px; top: 36px; bottom: 14px; width: 9px; background: linear-gradient(#b00000, #b00000) 4px 30px / 1px 100% no-repeat; }
.playhead::before { content: ""; display: block; height: 30px; border: 1px solid #b00000; background: rgba(190, 30, 30, .35); }

/* properties */
.props { width: 302px; color: #d0d0d0; }
.kind { display: flex; gap: 28px; height: 63px; padding: 10px 0 0 28px; }
.kind svg { margin-top: 13px; }
.props section { border-top: 1px solid #383838; }
h2 { display: flex; align-items: center; gap: 5px; height: 20px; margin: 0; padding-left: 5px; font-size: 12px; font-weight: 400; }
h2::before { content: ""; border: 5px solid transparent; border-top: 6px solid #c8c8c8; border-bottom: 0; }
.pos { display: grid; grid-template-columns: 16px 39px 40px 61px 40px; column-gap: 8px; align-items: center; height: 30px; padding: 0 0 0 4px; border-bottom: 2px solid #4b4b4b; font-size: 11px; }
.pos label { text-align: right; }
.pos label:first-child { grid-column: 2; }
.size { height: 36px; padding-bottom: 2px; border: 0; }
.pos input { width: 38px; height: 16px; color: #fff; border-bottom: 1px dotted #bbb; }
.paint { display: flex; align-items: center; height: 34px; padding-left: 51px; gap: 9px; border-bottom: 2px solid #4b4b4b; color: #c8c8c8; }
.sw { width: 30px; height: 15px; margin-right: 52px; border: 1px solid #222; }
.sw.none { background: linear-gradient(153deg, #aaa 48%, #c55 48% 52%, #aaa 52%); }
.modes { display: flex; align-items: center; gap: 19px; height: 38px; padding: 0 0 3px 79px; border-bottom: 2px solid #4b4b4b; color: #ddd; }
.dim { color: #777; }
.stroke { padding: 4px 0 2px; border-bottom: 2px solid #4b4b4b; }
.line { display: flex; align-items: center; height: 20px; padding-left: 37px; font-size: 12px; }
.line > label:first-child { width: 36px; white-space: nowrap; }
.l1 { margin-bottom: 7px; }
.rail { width: 107px; height: 2px; margin: 0 12px; background: #666; }
.box { width: 50px; height: 19px; padding-left: 5px; border-radius: 2px; background: #575757; color: #7a7a7a; font-size: 11px; }
.l2 { gap: 6px; }
.l2 > label:first-child { width: 30px; }
.l2 > svg { margin-right: 1px; }
.l2 > svg + svg { margin-left: 1px; }
.wide { width: 148px; }
.mid { width: 124px; }
.line .pick { color: #777; }
.line select { background-color: #575757; }
.line select.solid { background: linear-gradient(#858585, #858585) 13px 8px / 106px 2px no-repeat #575757; }
.line select.profile { background: linear-gradient(#2bdc2b, #2bdc2b) 12px 9px / 102px 1px no-repeat, linear-gradient(#858585, #858585) 12px 4px / 102px 11px no-repeat #575757; }
.manage { width: 160px; height: 19px; margin: 5px 0 3px 73px; justify-content: center; border-radius: 2px; background: #575757; color: #7a7a7a; }
.scale { height: 28px; border-bottom: 2px solid #4b4b4b; }
.hint { display: flex; align-items: center; gap: 6px; margin-left: 3px; color: #7a7a7a; }
.hint input { appearance: none; width: 11px; height: 11px; border: 1px solid #888; border-radius: 2px; }
.ends { display: grid; gap: 4px; padding-top: 8px; }
.dash { width: 8px; height: 2px; margin: 0 13px 0 7px; background: #3c3c3c; }
.miter { margin-left: 80px; width: 34px; }
.mi { width: 26px; color: #7a7a7a; border-bottom: 1px dotted #7a7a7a; font-size: 11px; }

/* desktop overlays */
.activate { position: absolute; right: 95px; bottom: 49px; width: 194px; color: #969696; white-space: nowrap; }
.activate p { margin: 0; font-size: 15px; line-height: 22px; }
.activate p:first-child { font-size: 20px; line-height: 26px; }
.meter { position: absolute; right: 0; bottom: 126px; }
.ime { position: absolute; right: 0; bottom: 1px; width: 128px; height: 25px; background: #fff; border: 1px solid #c4d4ee; overflow: hidden; }
.site { position: absolute; right: 0; bottom: 0; display: flex; width: 160px; height: 50px; }
.site div { display: flex; flex-direction: column; margin-left: -2px; }
.site b { font-size: 21px; line-height: 26px; color: #285f97; white-space: nowrap; }
.site a { font: 18px/20px "Liberation Sans", sans-serif; color: #3aa84e; opacity: .65; text-decoration: none; }
```
